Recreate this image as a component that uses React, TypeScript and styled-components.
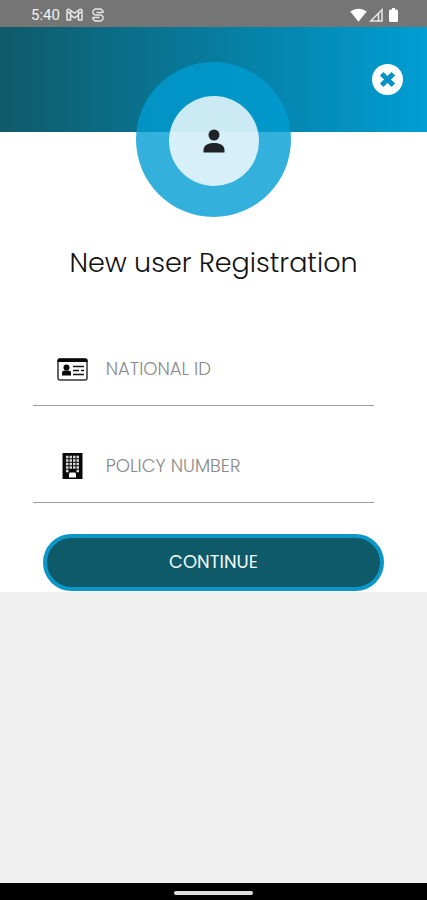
import React from "react";
import styled, { createGlobalStyle } from "styled-components";

const GlobalStyle = createGlobalStyle`
  *, *::before, *::after { box-sizing: border-box; }
  body { margin: 0; background: #f0f0f0; }
  body, input, button { font-family: Poppins, Inter, "Open Sans", sans-serif; }
`;

const Screen = styled.div`
  display: flex;
  flex-direction: column;
  min-height: 100vh;
  background: #f0f0f0;
`;

const StatusBar = styled.div`
  display: flex;
  align-items: center;
  justify-content: space-between;
  height: 27px;
  padding: 2px 29px 0 31px;
  background: #757575;
  color: #f2f2f2;
  font: 400 15px/20px Roboto, sans-serif;
`;

const StatusGroup = styled.div<{ $gap: number }>`
  display: flex;
  align-items: center;
  gap: ${({ $gap }) => $gap}px;
`;

const Header = styled.header`
  position: relative;
  display: flex;
  align-items: flex-start;
  justify-content: center;
  height: 105px;
  padding-top: 35px;
  background: linear-gradient(90deg, #0f5a69 0%, #009ed4 100%);
`;

const CloseButton = styled.button`
  position: absolute;
  top: 37px;
  right: 24px;
  display: flex;
  align-items: center;
  justify-content: center;
  width: 31px;
  height: 31px;
  padding: 0;
  border: 0;
  border-radius: 50%;
  background: #fff;
  color: #0693c4;
  cursor: pointer;
`;

const AvatarRing = styled.div`
  display: flex;
  flex: none;
  align-items: center;
  justify-content: center;
  width: 155px;
  height: 155px;
  padding-top: 3px;
  border-radius: 50%;
  background: rgba(0, 156, 210, 0.8);
`;

const AvatarDisc = styled.div`
  display: flex;
  align-items: center;
  justify-content: center;
  width: 90px;
  height: 90px;
  border-radius: 50%;
  background: rgba(255, 255, 255, 0.8);
`;

const Panel = styled.main`
  display: flex;
  flex-direction: column;
  align-items: center;
  padding: 111px 0 1px;
  background: #fff;
`;

const Title = styled.h1`
  margin: 0;
  color: #111;
  font-size: 27px;
  font-weight: 300;
  line-height: 40px;
`;

const Form = styled.form`
  width: 80%;
  padding-top: 50px;
`;

const Field = styled.div`
  display: flex;
  align-items: center;
  height: 73px;
  margin: 0 10px 24px -10px;
  padding-left: 24px;
  border-bottom: 1px solid #9c9c9c;
`;

const FieldLabel = styled.label`
  display: flex;
  flex: none;
  justify-content: center;
  width: 31px;
`;

const FieldInput = styled.input`
  flex: 1;
  min-width: 0;
  height: 40px;
  margin-left: 18px;
  padding: 0 0 2px;
  border: 0;
  outline: 0;
  background: transparent;
  color: #222;
  font-size: 18px;
  font-weight: 300;
  &::placeholder { color: #8a8a8a; opacity: 1; }
`;

const ContinueButton = styled.button`
  display: block;
  width: 100%;
  height: 57px;
  margin: 31px 0 0;
  padding: 0 0 3px;
  border: 4px solid #0c97c8;
  border-radius: 29px;
  background: #0e5a69;
  color: #f4fafb;
  font-size: 18px;
  font-weight: 400;
  cursor: pointer;
`;

const NavigationBar = styled.div`
  display: flex;
  align-items: center;
  justify-content: center;
  height: 17px;
  margin-top: auto;
  background: #000;
`;

const HomeHandle = styled.div`
  width: 79px;
  height: 4px;
  margin-top: 2px;
  border-radius: 2px;
  background: #dedede;
`;

const MailIcon = () => (
  <svg width="17" height="13" viewBox="0 0 17 13" fill="none" stroke="#e6e6e6" strokeWidth="1.5" strokeLinejoin="round" aria-hidden="true">
    <path d="M1 2.2 2.6 1 8.5 5.2 14.4 1 16 2.2V12h-3.6V7L8.5 9.8 4.6 7v5H1Z" />
    <path d="M4.6 2.6V7M12.4 2.6V7M1.4 3.6l3.2 2.6M15.6 3.6l-3.2 2.6" />
  </svg>
);

const SyncIcon = () => (
  <svg width="12" height="14" viewBox="0 0 12 14" fill="none" stroke="#e6e6e6" strokeWidth="1.4" strokeLinejoin="round" aria-hidden="true">
    <path d="M11 5V3L9 1H3L1 3v2.5L3 7h6l2 1.500V11l-2 2H3l-2-2V9" />
    <path d="M11 4.500H4.500M1 9.500h6.500" />
  </svg>
);

const WifiIcon = () => (
  <svg width="17" height="14" viewBox="0 0 17 14" fill="#fff" aria-hidden="true">
    <path d="M.3 3.600C5-.3 12-.3 16.700 3.600L8.500 13.800Z" />
  </svg>
);

const SignalIcon = () => (
  <svg width="14" height="14" viewBox="0 0 14 14" fill="none" stroke="#e8e8e8" strokeWidth="1.500" aria-hidden="true">
    <path d="M13 1.800V13H1.800ZM9.500 5.500V13" />
  </svg>
);

const BatteryIcon = () => (
  <svg width="9" height="14" viewBox="0 0 9 14" fill="#fff" aria-hidden="true">
    <path d="M3 0h3v1.500h1.500Q9 1.500 9 3v9.500Q9 14 7.500 14h-6Q0 14 0 12.500V3q0-1.500 1.500-1.500H3Z" />
  </svg>
);

const CloseIcon = () => (
  <svg width="17" height="17" viewBox="0 0 16 16" fill="none" stroke="currentColor" strokeWidth="4.600" strokeLinejoin="round" aria-hidden="true">
    <path d="m2.500 2.500 11 11m0-11-11 11" />
  </svg>
);

const PersonIcon = () => (
  <svg width="22" height="24" viewBox="0 0 22 24" fill="#1f2226" aria-hidden="true">
    <circle cx="11" cy="6" r="5.500" />
    <path d="M.5 23.500V21C.5 16.500 5 14 11 14s10.500 2.500 10.500 7v2.500Z" />
  </svg>
);

const IdCardIcon = () => (
  <svg width="31" height="23" viewBox="0 0 31 23" aria-hidden="true">
    <rect x="1" y="1" width="29" height="21" rx="2" fill="#fff" stroke="#333" strokeWidth="1.500" />
    <path d="M.5 4V2.500Q.5.500 2.500.500h26q2 0 2 2V4Z" fill="#080808" />
    <circle cx="9.500" cy="9.500" r="3" fill="#080808" />
    <path d="M5 17.500V15q0-2.500 2.500-2.500h4Q14 12.500 14 15v2.500Z" fill="#080808" />
    <path d="M16 8.500h11M16 12.500h6m2 0h3M16 16.500h11" stroke="#111" strokeWidth="1.700" />
  </svg>
);

const BuildingIcon = () => (
  <svg width="21" height="26" viewBox="0 0 21 26" aria-hidden="true">
    <path d="M.5 0h20v26H.5Z" fill="#080808" />
    {[4, 7.5, 11, 14.5].map((y) => (
      <path key={y} d={`M4 ${y}h13`} stroke="#d8d8d8" strokeWidth="2.400" strokeDasharray="2.500 1" />
    ))}
    <path d="M4 18h2.500M14.500 18H17" stroke="#d8d8d8" strokeWidth="2.400" />
    <path d="M7 24.500V20.500l1-1h5l1 1v4Z" fill="#fff" />
  </svg>
);

export default function App() {
  return (
    <Screen>
      <GlobalStyle />
      <StatusBar>
        <StatusGroup $gap={9}>
          <StatusGroup $gap={6}>
            <span>5:40</span>
            <MailIcon />
          </StatusGroup>
          <SyncIcon />
        </StatusGroup>
        <StatusGroup $gap={6}>
          <StatusGroup $gap={2}>
            <WifiIcon />
            <SignalIcon />
          </StatusGroup>
          <BatteryIcon />
        </StatusGroup>
      </StatusBar>
      <Header>
        <AvatarRing>
          <AvatarDisc>
            <PersonIcon />
          </AvatarDisc>
        </AvatarRing>
        <CloseButton type="button" aria-label="Close">
          <CloseIcon />
        </CloseButton>
      </Header>
      <Panel>
        <Title>New user Registration</Title>
        <Form onSubmit={(event) => event.preventDefault()}>
          <Field>
            <FieldLabel htmlFor="national-id" aria-label="National ID">
              <IdCardIcon />
            </FieldLabel>
            <FieldInput id="national-id" placeholder="NATIONAL ID" />
          </Field>
          <Field>
            <FieldLabel htmlFor="policy-number" aria-label="Policy number">
              <BuildingIcon />
            </FieldLabel>
            <FieldInput id="policy-number" placeholder="POLICY NUMBER" />
          </Field>
          <ContinueButton type="submit">CONTINUE</ContinueButton>
        </Form>
      </Panel>
      <NavigationBar>
        <HomeHandle />
      </NavigationBar>
    </Screen>
  );
}
